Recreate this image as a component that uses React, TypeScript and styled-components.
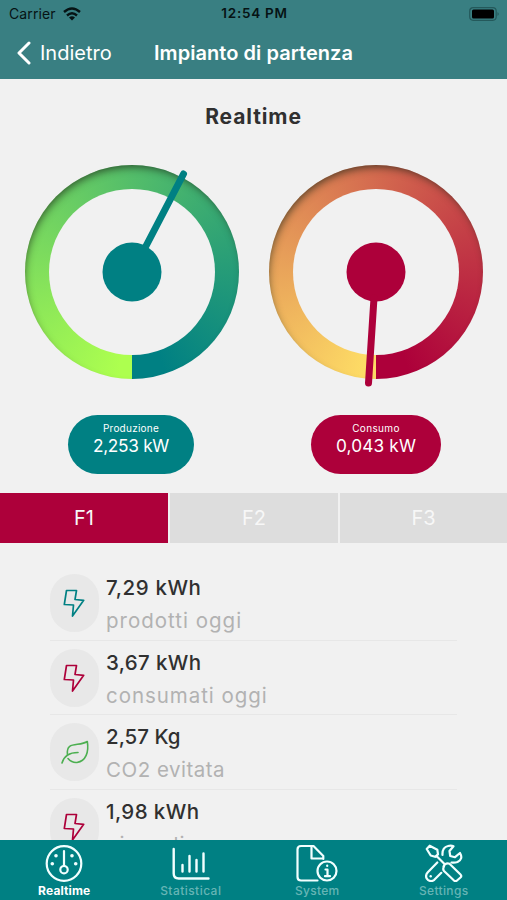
import React from 'react';
import styled, { createGlobalStyle } from 'styled-components';

const Global = createGlobalStyle`
  * { box-sizing: border-box; }
  body { margin: 0; background: #f1f1f1; }
`;

const Screen = styled.div`
  width: 507px;
  height: 900px;
  display: flex;
  flex-direction: column;
  overflow: hidden;
  background: #f1f1f1;
  font-family: Inter, "Liberation Sans", sans-serif;
  color: #303030;
`;

const Text = styled.span<{ $size: number; $line?: number; $weight?: number; $track?: number; $color?: string }>`
  display: block;
  white-space: pre;
  font-size: ${p => p.$size}px;
  line-height: ${p => p.$line ?? p.$size}px;
  font-weight: ${p => p.$weight ?? 400};
  letter-spacing: ${p => p.$track ?? 0}px;
  color: ${p => p.$color ?? 'inherit'};
`;

const Header = styled.header`
  flex: 0 0 79px;
  background: #397f82;
`;

const StatusBar = styled.div`
  height: 28px;
  display: grid;
  grid-template-columns: 1fr auto 1fr;
  align-items: center;
  padding: 0 7px 0 9px;
  color: #061314;
  svg { display: block; }
`;

const Carrier = styled.div`
  display: flex;
  align-items: center;
  gap: 7px;
`;

const Battery = styled.div`
  justify-self: end;
`;

const NavBar = styled.div`
  height: 49px;
  display: grid;
  grid-template-columns: 1fr auto 1fr;
  align-items: center;
  padding: 0 15px;
  color: #fff;
`;

const Back = styled.div`
  display: flex;
  align-items: center;
  gap: 9px;
  padding-left: 2px;
`;

const Heading = styled.h1`
  margin: 0;
  height: 86px;
  padding-top: 26px;
  display: flex;
  justify-content: center;
`;

const Gauges = styled.section`
  display: grid;
  grid-template-columns: 214px 214px;
  column-gap: 30px;
  padding-left: 25px;
  height: 250px;
`;

const Dial = styled.div<{ $from: string; $to: string }>`
  width: 214px;
  height: 214px;
  border-radius: 50%;
  display: grid;
  place-items: center;
  background: conic-gradient(from 180deg, ${p => p.$from} 2%, ${p => p.$to} 95%);
  box-shadow: inset 2px 5px 8px -3px rgba(25, 35, 20, 0.7);
`;

const Face = styled.div`
  width: 166px;
  height: 166px;
  border-radius: 50%;
  background: #f1f1f1;
  svg { display: block; overflow: visible; }
`;

const Pills = styled.section`
  height: 78px;
  display: flex;
  padding-left: 68px;
  gap: 117px;
`;

const Pill = styled.div<{ $color: string; $width: number }>`
  width: ${p => p.$width}px;
  height: 59px;
  border-radius: 30px;
  background: ${p => p.$color};
  color: #fff;
  display: flex;
  flex-direction: column;
  align-items: center;
  padding-top: 7px;
`;

const Segments = styled.div`
  height: 50px;
  display: grid;
  grid-template-columns: 168px 168px 167px;
  gap: 2px;
  flex-shrink: 0;
`;

const Segment = styled.div<{ $active?: boolean }>`
  display: grid;
  place-items: center;
  background: ${p => (p.$active ? '#ad003a' : '#dddddd')};
  color: #f7f7f7;
`;

const List = styled.div`
  flex: 1;
  min-height: 0;
  overflow: hidden;
  padding: 23px 50px 0;
`;

const Item = styled.div`
  height: 74.6px;
  display: flex;
  gap: 7px;
  padding-top: 8px;
  border-bottom: 1px solid #e7e7e7;
`;

const Badge = styled.div<{ $color: string }>`
  width: 49px;
  height: 58px;
  border-radius: 25px;
  background: #e8e8e8;
  color: ${p => p.$color};
  display: grid;
  place-items: center;
  svg { display: block; }
`;

const TabBar = styled.nav`
  flex: 0 0 60px;
  display: grid;
  grid-template-columns: repeat(4, 126.5px);
  padding-left: 1px;
  background: #008083;
`;

const Tab = styled.div<{ $active?: boolean }>`
  display: flex;
  flex-direction: column;
  align-items: center;
  padding-top: 4px;
  gap: 2px;
  color: ${p => (p.$active ? '#ffffff' : '#66b5b5')};
  svg { display: block; color: #f2ffff; }
`;

const Bolt = () => (
  <svg width="24" height="30" viewBox="0 0 24 30" fill="none" stroke="currentColor" strokeWidth="1.7" strokeLinejoin="round">
    <path d="M3.500 2.500h10L12 11.500l8.700.8L9.500 28l1-11-9.200-.5z" />
  </svg>
);

const Leaf = () => (
  <svg width="30" height="28" viewBox="0 0 30 28" fill="none" stroke="currentColor" strokeWidth="1.6" strokeLinecap="round" strokeLinejoin="round">
    <path d="M2 25Q5 14.500 18 14.500" />
    <path d="M7.500 17C5.500 2.500 19 9 27.300 3.500C29 14 26 23 17 24.500Q12 25 8 20.500" />
  </svg>
);

const GaugeIcon = () => (
  <svg width="38" height="38" viewBox="0 0 38 38" fill="none" stroke="currentColor" strokeWidth="2.2">
    <circle cx="19" cy="19.500" r="17.300" />
    <circle cx="19" cy="25.700" r="3.700" />
    <path d="M19 7v15" strokeLinecap="round" />
    <g fill="currentColor" stroke="none">
      <circle cx="7.300" cy="19.700" r="1.800" /><circle cx="11" cy="11.700" r="1.800" />
      <circle cx="27" cy="11.700" r="1.800" /><circle cx="30.700" cy="19.700" r="1.800" />
    </g>
  </svg>
);

const ChartIcon = () => (
  <svg width="38" height="38" viewBox="0 0 38 38" fill="none" stroke="currentColor" strokeWidth="2.4" strokeLinecap="round">
    <path d="M1.700 5v24.500q0 5 5 5H36.500M10.500 21v6.500M17.500 12v15.500M24.500 16v11.500M31.500 9.500v18" />
  </svg>
);

const SystemIcon = () => (
  <svg width="42" height="38" viewBox="0 0 42 38" fill="none" stroke="currentColor" strokeWidth="2.2" strokeLinejoin="round" strokeLinecap="round">
    <path d="M21.500 36.500H5q-3.500 0-3.500-3.500V5.500Q1.500 2 5 2h12.500l9.800 10v3M15.500 2v12.500h11.800" />
    <circle cx="31" cy="27" r="9.500" />
    <path d="M29.500 25.500h2v6.500M29 32.200h5M31.200 21.500v.5" />
  </svg>
);

const ToolsIcon = () => (
  <svg width="38" height="38" viewBox="0 0 38 38" fill="none" stroke="currentColor" strokeWidth="2.2" strokeLinejoin="round" strokeLinecap="round">
    <path d="M4.700 1.700l-3 3.300 4 6.500 4.300 1.300 3-2.500-.7-4.600zM11.500 12l8 8" />
    <path d="M18.500 22.500q2-4 6-2.700L35.500 30.500q1.500 1.500 0 3L32 36.500q-1.500 1.300-3 0L19 27q-1.500-2 0-4.500z" />
    <path d="M17.500 11Q17 3.500 23 2q3-1 5.500.2L24.500 7l.7 5 4.800 1.200L35 9q3.500 6-2.500 9-3 1-6 .5" />
    <path d="M12.300 18.500l-9.500 9.800q-3.500 4 0 7.500 3.500 2.500 6.500 0l7-7" />
    <circle cx="5.700" cy="32.300" r="1.200" fill="currentColor" stroke="none" />
  </svg>
);

interface GaugeProps { from: string; to: string; x: number; y: number; startX: number; startY: number }

const Gauge = ({ from, to, x, y, startX, startY }: GaugeProps) => (
  <Dial $from={from} $to={to}>
    <Face>
      <svg width="166" height="166" viewBox="-83 -83 166 166">
        <circle r="29.500" fill={to} />
        <line x1={startX} y1={startY} x2={x} y2={y} stroke={to} strokeWidth="7" strokeLinecap="round" />
      </svg>
    </Face>
  </Dial>
);

const items = [
  { value: '7,29 kWh', label: 'prodotti oggi', color: '#008083', icon: <Bolt />, valueTrack: 0.6, labelTrack: 1 },
  { value: '3,67 kWh', label: 'consumati oggi', color: '#ad003a', icon: <Bolt />, valueTrack: 0.35, labelTrack: 0.95 },
  { value: '2,57 Kg', label: 'CO2 evitata', color: '#4caf50', icon: <Leaf />, valueTrack: 0, labelTrack: 0.5 },
  { value: '1,98 kWh', label: 'giornali', color: '#ad003a', icon: <Bolt />, valueTrack: 0.4, labelTrack: 1 },
];

export default function App() {
  return (
    <Screen>
      <Global />
      <Header>
        <StatusBar>
          <Carrier>
            <Text $size={14} $track={0.1}>Carrier</Text>
            <svg width="18" height="14" viewBox="0 0 18 14" fill="none" stroke="currentColor" strokeWidth="2.4">
              <path d="M1 5Q9-2 17 5M4 8.500Q9 4 14 8.500" />
              <path d="M6 10.500Q9 8 12 10.500L9 13.500z" fill="currentColor" stroke="none" />
            </svg>
          </Carrier>
          <Text $size={13.5} $weight={600} $track={0.75}>12:54 PM</Text>
          <Battery>
            <svg width="31" height="14" viewBox="0 0 31 14">
              <rect x="0.700" y="0.700" width="26.500" height="12.600" rx="3.500" fill="none" stroke="#24595b" strokeWidth="1.2" />
              <rect x="3" y="2.500" width="22" height="9" rx="1.500" fill="#000" />
              <path d="M28.500 5q2.500 2 0 4z" fill="#24595b" />
            </svg>
          </Battery>
        </StatusBar>
        <NavBar>
          <Back>
            <svg width="14" height="24" viewBox="0 0 14 24" fill="none" stroke="currentColor" strokeWidth="3" strokeLinecap="round" strokeLinejoin="round">
              <path d="M12 2L2 12l10 10" />
            </svg>
            <Text $size={20}>Indietro</Text>
          </Back>
          <Text $size={20} $weight={600} $track={0.05}>Impianto di partenza</Text>
        </NavBar>
      </Header>
      <Heading><Text $size={21} $line={24} $weight={700} $track={0.9}>Realtime</Text></Heading>
      <Gauges>
        <Gauge from="#adff4f" to="#008083" x={51.5} y={-98} startX={14} startY={-26} />
        <Gauge from="#fddb65" to="#ad003a" x={-7.5} y={111} startX={-2} startY={26} />
      </Gauges>
      <Pills>
        <Pill $color="#008083" $width={126}>
          <Text $size={10} $line={13} $track={0.25}>Produzione</Text>
          <Text $size={17.25} $line={22} $track={-0.3}>2,253 kW</Text>
        </Pill>
        <Pill $color="#ad003a" $width={130}>
          <Text $size={10} $line={13} $track={0.35}>Consumo</Text>
          <Text $size={17.25} $line={22} $track={0.15}>0,043 kW</Text>
        </Pill>
      </Pills>
      <Segments>
        <Segment $active><Text $size={20}>F1</Text></Segment>
        <Segment><Text $size={20}>F2</Text></Segment>
        <Segment><Text $size={20}>F3</Text></Segment>
      </Segments>
      <List>
        {items.map(i => (
          <Item key={i.value}>
            <Badge $color={i.color}>{i.icon}</Badge>
            <div>
              <Text $size={20.5} $line={27} $weight={450} $track={i.valueTrack}>{i.value}</Text>
              <Text $size={20.5} $line={40} $track={i.labelTrack} $color="#b2b2b2">{i.label}</Text>
            </div>
          </Item>
        ))}
      </List>
      <TabBar>
        <Tab $active><GaugeIcon /><Text $size={12} $line={14} $weight={700} $track={0.15}>Realtime</Text></Tab>
        <Tab><ChartIcon /><Text $size={12} $line={14} $weight={500} $track={0.45}>Statistical</Text></Tab>
        <Tab><SystemIcon /><Text $size={12} $line={14} $weight={500} $track={0.3}>System</Text></Tab>
        <Tab><ToolsIcon /><Text $size={12} $line={14} $weight={500} $track={0.35}>Settings</Text></Tab>
      </TabBar>
    </Screen>
  );
}
